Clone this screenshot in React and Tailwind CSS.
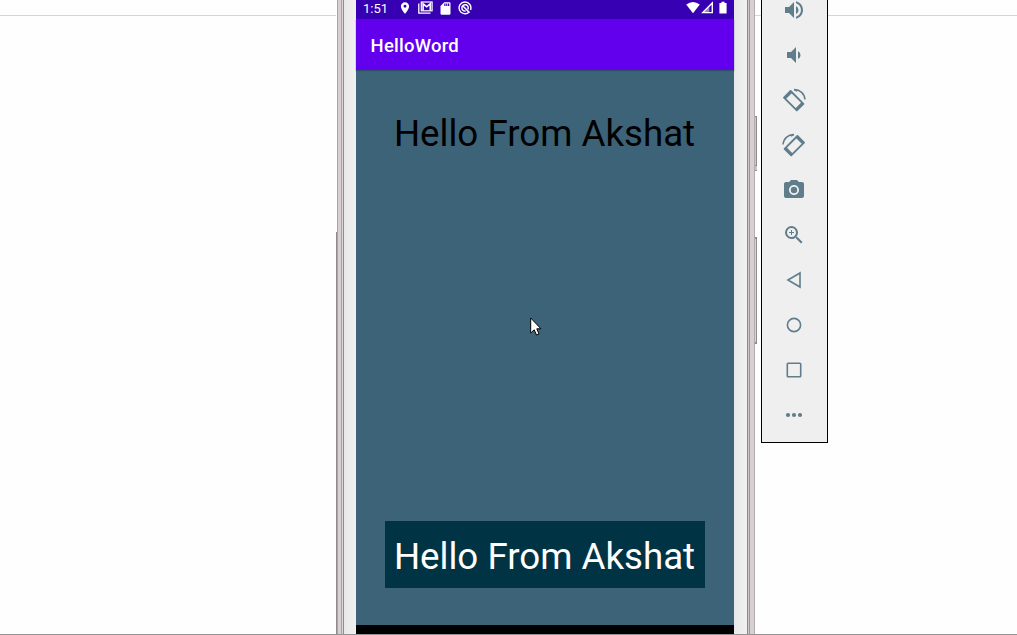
import React from 'react';
import { MdLocationOn, MdSdCard, MdCameraAlt, MdZoomIn, MdVolumeUp, MdVolumeDown } from 'react-icons/md';

function RotateIcon({ flip }) {
  return (
    <svg width="24" height="24" viewBox="0 0 24 24" fill="none" stroke="currentColor" className={flip ? '-scale-x-100' : ''}>
      <path d="M2 9.6 8.6 3 21.4 15.8 14.8 22.4Z" strokeWidth="1.9" strokeLinejoin="round" />
      <path d="M2.8 10.4 9.4 3.8M14 21.6 20.6 15" strokeWidth="2.6" />
      <path d="M12 1.6C18 1.4 22.6 5.8 23 11.5M12 1.6l3.2 1.6" strokeWidth="1.5" />
    </svg>
  );
}

function MailIcon() {
  return (
    <svg width="15" height="13" viewBox="0 0 15 13" fill="none" stroke="white">
      <path d="M.8 2.5V12.2H12.5" strokeWidth="1.3" />
      <rect x="3.3" y="1" width="10.8" height="8.8" strokeWidth="1.2" />
      <path d="M5.1 9.5V2.8L8.7 5.8 12.3 2.8V9.5" strokeWidth="1.6" />
    </svg>
  );
}

function SyncIcon() {
  return (
    <svg width="14" height="14" viewBox="0 0 14 14" fill="none" stroke="white">
      <path d="M11.2 11A5.9 5.9 0 1 1 12.5 9" strokeWidth="1.4" />
      <path d="M7.6 10A3.2 3.2 0 1 1 9.9 8.3M5.2 5.3 11.4 11.6" strokeWidth="1.5" />
    </svg>
  );
}

function StatusBar() {
  return (
    <div className="flex h-[19px] shrink-0 bg-[#3700b3] pl-[7px] text-white">
      <span className="w-[35px] whitespace-nowrap text-[13px] leading-[17px]">1:51</span>
      <span className="flex w-[20px] pt-[1px]"><MdLocationOn size={14} /></span>
      <span className="w-[20px] pt-[1px]"><MailIcon /></span>
      <span className="w-[20px] pt-[1px]"><MdSdCard size={15} /></span>
      <span className="pt-[1px]"><SyncIcon /></span>
      <span className="ml-auto flex pr-[7px] pt-[1px]">
        <svg width="14" height="13" viewBox="0 0 14 13" fill="white">
          <path d="M7 12.3.2 3.6Q7-1.6 13.8 3.6Z" />
        </svg>
        <svg className="ml-[1px]" width="13" height="13" viewBox="0 0 13 13" fill="none" stroke="white">
          <path d="M1.8 11.6 11.3 2V11.6Z" strokeWidth="1.4" />
          <path d="M2 12 8.3 5.7V12Z" fill="white" fillOpacity=".5" stroke="none" />
        </svg>
        <svg className="ml-[5px]" width="8" height="13" viewBox="0 0 8 13" fill="white">
          <path d="M2.4.8h3.2v1.3h2V12.4H.4V2.1h2Z" />
        </svg>
      </span>
    </div>
  );
}

function LeftFrame() {
  return (
    <div className="flex w-[20px] shrink-0">
      <div className="w-px bg-[#8e8c8e] mt-[232px]" />
      <div className="w-px bg-[#a8a4a6]" />
      <div className="w-[3px] bg-[#d7cfd2]" />
      <div className="w-px bg-[#a7a2a5]" />
      <div className="w-px bg-[#dcd5d8]" />
      <div className="w-px bg-[#908c8f]" />
      <div className="flex-1 bg-linear-to-r from-[#e8e8ea] to-[#f1f1f1]" />
    </div>
  );
}

function RightFrame() {
  return (
    <div className="flex w-[27px] shrink-0">
      <div className="w-[13px] bg-linear-to-r from-[#e8e8ea] to-[#f1f1f1]" />
      <div className="w-px bg-[#8c888b]" />
      <div className="w-px bg-[#cfc8cb]" />
      <div className="w-px bg-[#989396]" />
      <div className="w-[4px] bg-[#d8cfd2]" />
      <div className="w-px bg-[#b3acaf]" />
      <div className="flex w-[2px] flex-col pt-[116px]">
        <div className="h-[49px] border-r border-t border-[#8e8c8e] bg-[#c9c5c7]" />
        <div className="h-[6px] border-y border-[#8e8c8e] bg-[#c9c5c7]" />
        <div className="mt-[66px] h-[107px] border-y-2 border-r border-[#8e8c8e] bg-[#d6d2d4]" />
      </div>
    </div>
  );
}

function Phone() {
  return (
    <div className="flex">
      <LeftFrame />
      <div className="flex w-[378px] flex-col bg-[#3d6378]">
        <StatusBar />
        <div className="z-10 flex h-[51px] shrink-0 items-center bg-[#6200ee] pl-[14.5px] text-[18.5px] font-medium tracking-[0.25px] text-white shadow-[0_1px_1px_#31526a]">
          <span className="pt-[4px]">HelloWord</span>
        </div>
        <div className="flex flex-1 flex-col items-center justify-between pb-[37px] pt-[42px] text-[36.7px] leading-[44px]">
          <div className="whitespace-nowrap pr-px text-black">Hello From Akshat</div>
          <div className="flex h-[67px] w-[320px] items-center justify-center whitespace-nowrap bg-[#003344] pr-px pt-[5px] text-white">Hello From Akshat</div>
        </div>
        <div className="h-[10px] shrink-0 bg-black" />
      </div>
      <RightFrame />
    </div>
  );
}

const small = { width: 18, height: 18, viewBox: '0 0 18 18', fill: 'none', stroke: 'currentColor', strokeWidth: 1.6 };

const tools = [
  <MdVolumeUp size={24} />,
  <MdVolumeDown size={24} />,
  <RotateIcon />,
  <RotateIcon flip />,
  <MdCameraAlt size={24} />,
  <MdZoomIn size={24} />,
  <svg {...small}><path d="M3 9 15 2V16Z" /></svg>,
  <svg {...small}><circle cx="9" cy="9" r="6.6" /></svg>,
  <svg {...small}><rect x="2.3" y="2.3" width="13.4" height="13.4" rx=".8" /></svg>,
  <svg {...small} fill="currentColor" stroke="none"><circle cx="3" cy="9" r="2.1" /><circle cx="9" cy="9" r="2.1" /><circle cx="15" cy="9" r="2.1" /></svg>,
];

function Toolbar() {
  return (
    <div className="flex h-[443px] w-[67px] shrink-0 flex-col justify-end overflow-hidden border border-t-0 border-black bg-[#efefef] pb-[5px] pr-px text-[#607d8b]">
      {tools.map((icon, i) => (
        <div key={i} className="flex h-[45px] shrink-0 items-center justify-center">{icon}</div>
      ))}
    </div>
  );
}

export default function App() {
  return (
    <div className="relative flex h-[635px] w-[1017px] overflow-hidden bg-[#fefefe] font-['Roboto',sans-serif]">
      <div className="mt-[15px] h-px w-[336px] shrink-0 bg-[#d5d5d5]" />
      <Phone />
      <Toolbar />
      <div className="mt-[15px] h-px flex-1 bg-[#d5d5d5]" />
      <svg className="absolute left-[530px] top-[317px]" width="12" height="20" viewBox="0 0 12 20">
        <path d="M.7 1V16L4.2 12.8 6.5 18 9 17 6.8 11.8H11Z" fill="white" stroke="black" strokeWidth="1" />
      </svg>
      <div className="absolute left-[755px] top-[15px] h-px w-[6px] bg-[#d5d5d5]" />
      <div className="absolute bottom-0 left-0 z-20 h-px w-full bg-[#949494]" />
    </div>
  );
}
